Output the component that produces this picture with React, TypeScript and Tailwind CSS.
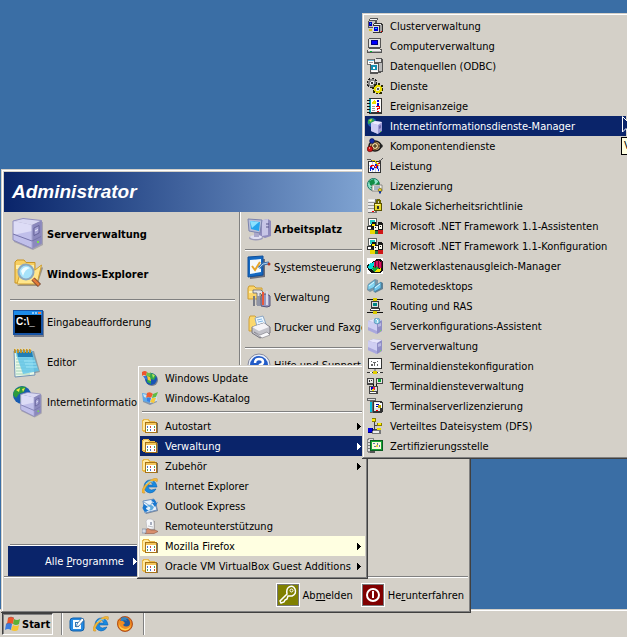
import React from "react";

type IconProps = { className?: string };
type IconType = (p: IconProps) => React.ReactElement;

const bevel =
  "bg-[#d4d0c8] p-[3px] shadow-[inset_-1px_-1px_0_#404040,inset_1px_1px_0_#d4d0c8,inset_-2px_-2px_0_#808080,inset_2px_2px_0_#ffffff]";

function icon(size: number, art: React.ReactNode, crisp = false): IconType {
  return ({ className = "" }) => (
    <svg
      viewBox={`0 0 ${size} ${size}`}
      width={size}
      height={size}
      className={`shrink-0 ${className}`}
      shapeRendering={crisp ? "crispEdges" : "auto"}
      aria-hidden="true"
    >
      {art}
    </svg>
  );
}

/* ---------- 32px and 24px icons ---------- */

const tower = (
  <>
    <path d="M2 4 L12 2 L31 4 L31 27 L21 32 L2 24Z" fill="#777592" opacity=".5" />
    <path d="M1 3 L11 .5 L29.500 2.500 L20 7Z" fill="#d9d8f2" />
    <path d="M1 3 L20 7 V30 L1 22Z" fill="#c0bfea" />
    <path d="M1 3 L20 7 V13 L1 17Z" fill="#dddcf6" />
    <path d="M20 7 L29.500 2.500 V25.500 L20 30.500Z" fill="#8b88bd" />
    <path d="M1 3 L11 .5 L29.500 2.500 V25.500 L20 30.500 L1 22Z" fill="none" stroke="#8f8dbd" />
    <path d="M20 7V30" stroke="#a5a3d0" />
    <path d="M1 16 L20 23 L29 18.500" fill="none" stroke="#7674aa" />
    <path d="M22 10 L27 7.500 V15 L22 17.500Z" fill="#a5a2d4" stroke="#5b588f" strokeWidth=".8" />
    <path d="M23 13 L26 11.500" stroke="#eeeeff" />
    <rect x="25" y="23" width="2" height="2" fill="#7be04c" />
  </>
);

const ServerLarge = icon(32, tower);

const ExplorerLarge = icon(
  32,
  <>
    <path d="M5 28 L25 28 L31 10 L30 9Z" fill="#746b58" opacity=".6" />
    <path d="M3 4 L5 2 H12 L14 4.500 H23 V25 H3Z" fill="#f7cf62" stroke="#c99524" />
    <path d="M4 7 H22 V11 H4Z" fill="#fff0ac" />
    <path d="M23 12 L29.500 7 L25 26 H5 L9 12Z" fill="#ffe68c" stroke="#d1a032" />
    <path d="M21 21 L27.500 27.500" stroke="#7c4a33" strokeWidth="4.500" />
    <path d="M21 21 L27 27" stroke="#e27b39" strokeWidth="2.500" />
    <circle cx="14" cy="14" r="7.500" fill="#a6e2fa" stroke="#8ca7bd" strokeWidth="2" />
    <path d="M9 13 Q12 7 18 10 Q13 11 11 18Z" fill="#effcff" />
  </>
);

const ConsoleLarge = icon(
  32,
  <>
    <rect x="2" y="5" width="30" height="26" fill="#767d8c" />
    <rect x="1" y="4" width="30" height="25" fill="#1653a4" />
    <rect x="2" y="5" width="28" height="4" fill="#1d8be8" />
    <rect x="20" y="6" width="2" height="2" fill="#8cc8fa" />
    <rect x="23" y="6" width="2" height="2" fill="#8cc8fa" />
    <rect x="26" y="6" width="3" height="2" fill="#f57c46" />
    <rect x="3" y="9" width="26" height="18" fill="#000" />
    <text x="4" y="19" fontSize="10" fontWeight="bold" fontFamily="Liberation Sans, sans-serif" fill="#fff">
      C:\_
    </text>
  </>
);

const NotepadLarge = icon(
  32,
  <>
    <path d="M3 5 L22 5 L28 26 L5 31Z" fill="#657a85" opacity=".6" />
    <path d="M2 5 H20 L23 29 L3 31Z" fill="#e9f8e7" stroke="#7193b5" />
    <path d="M4 10H15 M4 13H16 M4 16H16 M4 19H17 M4 22H18 M4 25H19 M4 28H18" stroke="#a4d2b9" />
    <path d="M3 5 H20 L27 25 L11 28Z" fill="#61c5e9" opacity=".85" />
    <path d="M5 6 H20 L21 11 H6Z" fill="#227eb5" />
    <path d="M12 15H23 M13 18H24 M14 21H25" stroke="#a0e6f6" />
    <path d="M3 7V3 M6 7V3 M9 7V3 M12 7V3 M15 7V3 M18 7V3" stroke="#bc922e" strokeWidth="2" />
    <path d="M3 3H4 M6 3H7 M9 3H10 M12 3H13 M15 3H16 M18 3H19" stroke="#ffe895" />
  </>
);

const IisLarge = icon(
  32,
  <>
    <circle cx="10" cy="9" r="9" fill="#185bb0" />
    <path d="M2 5 Q7 -1 14 1 L12 6 L7 8 L4 12 L1 9Z" fill="#2b9b3d" />
    <path d="M8 9 L14 7 L12 17 L8 16Z" fill="#208d35" />
    <path d="M4 4L8 2L7 6Z M10 3L13 2L11 6Z" fill="#f2e94c" />
    <g transform="translate(8 6) scale(.7 .8)">{tower}</g>
  </>
);

const MyComputer = icon(
  24,
  <>
    <path d="M12 4 L21 2 L24 4 V19 L18 21 L11 18Z" fill="#8f8bbc" />
    <path d="M15 3 L21 2 V18 L15 19Z" fill="#c7c5e6" />
    <path d="M19 7H22 M19 10H22" stroke="#565488" />
    <ellipse cx="9" cy="21" rx="7" ry="2.500" fill="#9c9bb9" />
    <ellipse cx="9" cy="20" rx="6" ry="2" fill="#e0dff2" />
    <path d="M7 15H12V20H7Z" fill="#aaa8cb" />
    <path d="M1 2 L15 3 L13 16 L2 14Z" fill="#b8bed9" stroke="#7c83ad" />
    <path d="M3 4 L13 5 L12 14 L4 12Z" fill="#25a5ed" />
    <path d="M3 4 L12 5 L5 11Z" fill="#8be2ff" />
  </>
);

const ControlPanel = icon(
  24,
  <>
    <path d="M3 4H18V22L3 24Z" fill="#6c6d77" />
    <path d="M1 2L16 1V20L1 22Z" fill="#1469c2" stroke="#104f99" />
    <path d="M3 5L14 4V17L3 19Z" fill="#f6fafc" />
    <path d="M5 11L8 15L13 7" fill="none" stroke="#e6a62d" strokeWidth="2" />
    <path d="M12 13L16 9L22 8" fill="none" stroke="#3e70aa" strokeWidth="3" />
    <path d="M12 13L16 9L21 8" fill="none" stroke="#a8d1ef" />
    <circle cx="22" cy="9" r="1.500" fill="#b43b24" />
  </>
);

const AdminTools = icon(
  24,
  <>
    <path d="M1 3L2 1H7L9 3H15V14H1Z" fill="#fbd56c" stroke="#cc9c31" />
    <path d="M2 6H14V8H2Z" fill="#fff2b2" />
    <path d="M6 8V5H14L17 8L15 10L13 8V20H10V8Z" fill="#e2e2e6" stroke="#66656f" strokeWidth=".8" />
    <path d="M10 11H13V21H10Z" fill="#9095a6" />
    <path d="M14 11L16 9H20L23 11V21L20 22L14 21Z" fill="#9797be" stroke="#555478" />
    <path d="M15 7H17V20H15Z" fill="#e9583b" />
    <path d="M19 6H21V20H19Z" fill="#dadae9" />
    <path d="M6 11H8V21H6Z" fill="#777b87" />
  </>
);

const Printer = icon(
  24,
  <>
    <path d="M2 4L3 1H8L10 3H16V16H2Z" fill="#fbd86e" stroke="#cfa03a" />
    <path d="M8 3L16 1L19 9L10 12Z" fill="#eaf6ff" stroke="#8da6c2" />
    <path d="M10 5L15 4M11 7L16 6" stroke="#86b8e4" />
    <path d="M5 12L17 8L23 12V18L13 23L5 18Z" fill="#c3c3ca" stroke="#77757d" />
    <path d="M5 12L17 8L22 12L12 16Z" fill="#f5f4f7" />
    <path d="M7 17L13 20L20 17L23 20L15 23Z" fill="#f9f9fb" stroke="#77757d" strokeWidth=".6" />
  </>
);

const Help = icon(
  24,
  <>
    <circle cx="12" cy="12" r="11" fill="#eaf0fb" stroke="#85899e" />
    <circle cx="12" cy="12" r="9" fill="#225bc7" />
    <path d="M8 10 Q8 6 12 6 Q16 6 16 9 Q16 11 13 12 V15" fill="none" stroke="#fff" strokeWidth="2.500" />
    <rect x="12" y="17" width="2" height="2" fill="#fff" />
  </>
);

const Key = icon(
  24,
  <>
    <rect width="24" height="24" fill="#fff" />
    <rect x="1" y="1" width="22" height="22" fill="#777777" />
    <rect x="2" y="2" width="20" height="20" fill="#808000" />
    <path d="M11 11 Q10 6 13 4 Q17 2 19 6 Q21 11 16 13 L12 13 L11 16 L9 17 L8 19 L5 20 L4 18Z" fill="none" stroke="#fff" strokeWidth="1.500" />
    <circle cx="15.500" cy="7.500" r="1.500" fill="none" stroke="#fff" />
  </>
);

const Power = icon(
  24,
  <>
    <rect width="24" height="24" fill="#fff" />
    <rect x="1" y="1" width="22" height="22" fill="#777777" />
    <rect x="2" y="2" width="20" height="20" fill="#800000" />
    <circle cx="12" cy="12" r="6" fill="none" stroke="#fff" strokeWidth="2" />
    <path d="M12 8V15" stroke="#fff" strokeWidth="2" />
  </>
);

/* ---------- 16px colour icons ---------- */

const WindowsFlag = icon(
  16,
  <>
    <path d="M4 2Q7 0 10 2L9 8Q6 6 3 8Z" fill="#ef562b" />
    <path d="M10 3Q13 5 16 3L15 8Q12 10 9 8Z" fill="#5cb135" />
    <path d="M2 8Q5 6 8 8L7 14Q4 12 1 14Z" fill="#3d7dde" />
    <path d="M9 9Q12 11 15 9L14 14Q11 16 7 14Z" fill="#f6c431" />
    <path d="M4 2Q7 0 10 2M2 8Q5 6 8 8" fill="none" stroke="#8c4a4a" strokeWidth=".5" />
  </>
);

const WindowsUpdate = icon(
  16,
  <>
    <circle cx="10" cy="10" r="6" fill="#777f8c" />
    <circle cx="9" cy="9" r="6" fill="#1854b5" />
    <path d="M6 6L10 3L14 6L12 10L9 9L9 14L5 12Z" fill="#31a84a" />
    <path d="M10 4L13 5L11 8Z" fill="#b7e35a" />
    <path d="M0 2Q3 0 5 2L4 6Q2 4 0 6Z" fill="#ee552e" />
    <path d="M5 2Q7 4 9 2L8 6Q6 7 4 6Z" fill="#72c046" />
    <path d="M1 6L4 6L6 10L3 9Z" fill="#3975dc" />
    <path d="M5 6L8 7L9 11L6 10Z" fill="#f6c638" />
  </>
);

const WindowsCatalog = icon(
  16,
  <>
    <path d="M1 5L7 7L15 4L15 12L8 15L1 12Z" fill="#8995a8" />
    <path d="M0 3L6 4L8 13L1 11Z" fill="#5ba9ea" />
    <path d="M8 5L15 3V11L8 13Z" fill="#cfe2f2" />
    <path d="M1 4L5 5V8L2 7Z" fill="#c9e6f7" />
    <path d="M5 3Q8 1 11 4L9 8Q7 6 4 8Z" fill="#f05c31" />
    <path d="M11 4L16 2L14 7L10 8Z" fill="#61bb42" />
    <path d="M5 8L9 8L8 12L5 11Z" fill="#3c7de2" />
    <path d="M10 8L14 8L12 13L8 12Z" fill="#f8ca3b" />
  </>
);

const ProgramFolder = icon(
  16,
  <>
    <path d="M3 15H16V5H15Z" fill="#777068" />
    <path d="M0 3L1 1H6L8 3H13V6H4V14H1L0 12Z" fill="#e9b94a" />
    <path d="M1 3L2 2H6L7 4H12V5H3V12H1Z" fill="#ffe9a0" />
    <path d="M3 4H15V15H3Z" fill="#a87418" />
    <path d="M4 5H14V7H4Z" fill="#f3c65c" />
    <path d="M4 7H14V14H4Z" fill="#ffffff" />
    <path d="M5 8H6V10H5Z M8 11H9V13H8Z" fill="#4876c8" />
    <path d="M8 8H9V10H8Z M12 11H13V13H12Z" fill="#d45135" />
    <path d="M12 8H13V10H12Z M5 11H6V13H5Z" fill="#48a55b" />
  </>,
  true,
);

const InternetExplorer = icon(
  16,
  <>
    <path
      d="M15 9H6Q7 12 9.500 12L14 11Q12 15 8 15Q2 14 2 8Q3 2 8.500 2Q14 2.500 15 9ZM6 7H11Q10 4.500 8.500 4.500Q6.500 4.500 6 7Z"
      fill="#198be0"
      stroke="#0b60b2"
      strokeWidth=".6"
      fillRule="evenodd"
    />
    <path d="M3 15Q-2 16 1 10Q5 3 12 .5Q17 -1 15 4Q14 2 11 3Q4 7 2 13Z" fill="#f4b834" stroke="#bf8420" strokeWidth=".4" />
    <path d="M4 6Q7 2 11 4" stroke="#78ceff" fill="none" />
  </>
);

const OutlookExpress = icon(
  16,
  <>
    <path d="M2 5L14 3L16 13L4 16Z" fill="#7b8799" />
    <path d="M1 3L12 1L15 12L3 15Z" fill="#e9f2fb" stroke="#6e91bd" />
    <path d="M2 4L8 8L12 2" fill="none" stroke="#84add5" />
    <path d="M11 1Q14 2 14 5L16 4L13 9L10 5H12Q11 3 9 3Z M4 14Q1 13 1 10L0 11L2 6L6 9L4 10Q4 12 7 12Z" fill="#1978d0" />
    <path d="M5 8Q8 5 12 9Q10 14 7 12Q9 11 8 9Z" fill="#5eabdf" />
  </>
);

const RemoteAssist = icon(
  16,
  <>
    <path d="M6 3H13V13H6Z" fill="#a3a09c" />
    <path d="M4 3Q5 0 9 1Q12 1 12 5V11H5Z" fill="#f7f8fa" stroke="#b9b8bb" strokeWidth=".7" />
    <path d="M9 4V7" stroke="#5a6684" />
    <path d="M6 8L11 9" stroke="#bcc0c8" />
    <path d="M3 12L6 10.500L9 12H13L16 13.500L12 15.500H3Z" fill="#d98f6c" stroke="#8f5843" strokeWidth=".6" />
    <path d="M0 11L4 11V15H0Z" fill="#d8dde6" stroke="#6f7d95" strokeWidth=".6" />
  </>
);

const QuickDesktop = icon(
  16,
  <>
    <rect x="1" y="2" width="14" height="13" rx="3" fill="#258be3" stroke="#105ea8" />
    <path d="M4 4H12V13H4Z" fill="#f4fbff" />
    <path d="M6 6.500H9M6 10.500H10M6.500 6V11" fill="none" stroke="#2d78b8" />
    <path d="M8 8L13 2L15 4L10 10L7.500 11Z" fill="#fff" stroke="#35679a" strokeWidth=".8" />
  </>
);

const Firefox = icon(
  16,
  <>
    <circle cx="8" cy="8" r="7.500" fill="#df6919" />
    <circle cx="8" cy="7" r="5" fill="#205a9f" />
    <path d="M4 1Q8 0 12 3L9 3L10 5Q6 3 4 6Z" fill="#3684bd" />
    <path d="M1 3L3 5L6 5L8 7L6 9Q9 12 13 9Q14 5 12 2Q17 8 13 13Q7 17 2 12Q-1 8 1 3Z" fill="#ef8d24" />
    <path d="M2 8Q3 12 8 13Q12 13 14 9Q12 16 6 14Q2 13 2 8Z" fill="#ffd04b" />
    <circle cx="8" cy="8" r="7.500" fill="none" stroke="#a2410f" strokeWidth=".8" />
  </>
);

/* ---------- 16px classic icons ---------- */

const Cluster = icon(
  16,
  <>
    <path d="M2 1H3V0H11V2H10V10H1V3H2Z" fill="#555" />
    <path d="M3 1H10V2H3Z" fill="#f5f5f5" />
    <path d="M2 3H8V9H2Z" fill="#c5c5c5" />
    <path d="M2 4H5V8H2Z" fill="#0000c0" />
    <path d="M3 5H4V6H3Z" fill="#00d9dc" />
    <path d="M6 6H7V5H15V6H16V14H15V15H6Z" fill="#333" />
    <path d="M7 6H14V7H7Z" fill="#f5f5f5" />
    <path d="M6 8H12V14H6Z" fill="#dcdcdc" />
    <path d="M7 9H11V13H7Z" fill="#0000df" />
    <path d="M8 10H10V11H8Z" fill="#00d9dc" />
    <path d="M13 7H15V14H13Z" fill="#a4a4a4" />
    <path d="M2 11H5V13H2Z" fill="#d4c020" />
    <path d="M14 13H15V14H14Z" fill="#f00" />
  </>,
  true,
);

const ComputerMgmt = icon(
  16,
  <>
    <path d="M2 0H14V10H13V11H15V15H0V12H2V10H1V1H2Z" fill="#555" />
    <path d="M2 1H13V9H2Z" fill="#e4e4e4" />
    <path d="M4 2H11V7H4Z" fill="#000080" />
    <path d="M5 3H10V6H5Z" fill="#0000ff" />
    <path d="M2 11H13V12H14V13H1V12H2Z" fill="#f0f0f0" />
    <path d="M1 13H14V14H1Z" fill="#aaa" />
    <path d="M3 13H5V14H3Z" fill="#00bb2c" />
  </>,
  true,
);

const Odbc = icon(
  16,
  <>
    <path d="M0 1H9V7H0Z" fill="#777" />
    <path d="M1 2H8V6H1Z" fill="#fff" />
    <path d="M1 2H7V3H1Z" fill="#69badd" />
    <path d="M2 4H6V5H2Z" fill="#999" />
    <path d="M7 1H9V0H15V1H16V14H14V15H11V16H3V6H7Z" fill="#555" />
    <path d="M8 1H14V4H8Z" fill="#e5e5e5" />
    <path d="M4 6H11V14H4Z" fill="#eeeeee" />
    <path d="M4 7H10V12H4Z" fill="#128daf" />
    <path d="M6 9H8V11H6Z" fill="#fff" />
    <path d="M12 5H15V13H12Z" fill="#bbb" />
    <path d="M5 13H11V14H5Z" fill="#fff" />
  </>,
  true,
);

const Services = icon(
  16,
  <>
    <circle cx="5" cy="5" r="4" fill="none" stroke="#222" strokeWidth="3" strokeDasharray="2 1" />
    <circle cx="5" cy="5" r="3" fill="#eee" stroke="#888" strokeWidth="2" />
    <circle cx="5" cy="5" r="1" fill="#333" />
    <circle cx="11" cy="11" r="4" fill="none" stroke="#282800" strokeWidth="3.500" strokeDasharray="2 1" />
    <circle cx="11" cy="11" r="3" fill="#e8e8d0" stroke="#e9dc00" strokeWidth="2" />
    <circle cx="11" cy="11" r="1" fill="#555" />
  </>,
  true,
);

const EventViewer = icon(
  16,
  <>
    <path d="M2 0H15V16H2Z" fill="#333" />
    <path d="M4 1H14V14H4Z" fill="#fff" />
    <path d="M2 1H4V15H2Z" fill="#00a0b0" />
    <path d="M0 2H3V3H0Z M0 5H3V6H0Z M0 8H3V9H0Z M0 11H3V12H0Z M0 14H3V15H0Z" fill="#111" />
    <path d="M5 8H8V9H5Z M5 10H8V11H5Z M5 12H8V13H5Z" fill="#999" />
    <path d="M5 4H6V3H7V2H8V3H9V6H5Z" fill="#f1de00" />
    <path d="M10 2H12V4H10Z M10 5H12V8H10Z" fill="#0000d5" />
    <path d="M9 8H13V11H11V12H10V10H12V9H9Z M10 13H12V14H10Z" fill="#e00" />
  </>,
  true,
);

const Iis = icon(
  16,
  <>
    <circle cx="5" cy="4.500" r="4.500" fill="#205eb0" />
    <path d="M1 2L5 0L8 3L5 5L1 6Z" fill="#30a656" />
    <path d="M2 2L5 1L4 4Z" fill="#e4e74d" />
    <path d="M4 5L8 3L15 4V13L11 16L4 13Z" fill="#9d9bd6" />
    <path d="M4 5L11 7V16L4 13Z" fill="#cfcef4" />
    <path d="M4 5L8 3L15 4L11 7Z" fill="#ecebff" />
    <path d="M12 8L14 7V10L12 11Z" fill="#6e6bab" />
    <path d="M13 13H14V14H13Z" fill="#7be04c" />
  </>
);

const Components = icon(
  16,
  <>
    <ellipse cx="8" cy="8" rx="6" ry="5" fill="#c7a47b" stroke="#161616" strokeWidth="1.500" />
    <circle cx="8" cy="8" r="3.500" fill="#f0d9a6" stroke="#604214" />
    <path d="M8 6V10M6 8H10" stroke="#241900" />
    <circle cx="3" cy="11" r="2.800" fill="#d31515" stroke="#450000" strokeWidth=".6" />
    <circle cx="5" cy="3" r="2.400" fill="#122aac" stroke="#030c45" strokeWidth=".6" />
    <circle cx="14" cy="8" r="1.800" fill="#222" />
    <path d="M2 10H3" stroke="#fff" />
  </>
);

const Performance = icon(
  16,
  <>
    <path d="M1 3H14V15H1Z" fill="#333" />
    <path d="M2 4H13V14H2Z" fill="#fff" />
    <path d="M5 4V14M8 4V14M11 4V14M2 7H13M2 10H13" stroke="#c3c9ec" />
    <path d="M3 13V8L6 12L9 6L12 13" fill="none" stroke="#0020df" />
    <path d="M3 9L6 7L9 10L11 5L13 6" fill="none" stroke="#f00000" />
    <path d="M0 1H3L6 4M12 5V2H14L16 0" fill="none" stroke="#555" />
    <path d="M5 2H7L12 8" fill="none" stroke="#e2c700" />
  </>,
  true,
);

const License = icon(
  16,
  <>
    <circle cx="6.500" cy="6.500" r="6" fill="#8de5cb" stroke="#147262" />
    <path d="M2 3L7 1L8 5L5 8L3 7ZM8 7L12 3L12 8L9 11ZM3 9L6 9L7 12Z" fill="#108d45" />
    <path d="M5 7H15V13H5Z" fill="#f7f4e8" stroke="#777" strokeWidth=".8" />
    <path d="M7 9H13M7 11H11" stroke="#5a72a1" />
    <circle cx="13" cy="12" r="1.800" fill="#e5ce27" stroke="#594a00" strokeWidth=".6" />
    <path d="M12 13H14V16L13 15L12 16Z" fill="#183d9a" />
  </>
);

const Policy = icon(
  16,
  <>
    <path d="M1 1H9L10 2V15H1Z" fill="#777" />
    <path d="M1 1H8V14H1Z" fill="#e9e9e9" />
    <path d="M1 4H8V5H1Z M1 7H8V8H1Z M1 10H8V11H1Z" fill="#999" />
    <path d="M2 2H7V3H2Z" fill="#fff" />
    <path d="M5 13H7V14H5Z" fill="#f00" />
    <path d="M9 6V2H10V1H13V2H14V6H12V3H11V6Z" fill="#6b6500" />
    <path d="M7 5H15V13H7Z" fill="#5b5300" />
    <path d="M8 6H14V12H8Z" fill="#e8da2c" />
    <path d="M8 6H13V7H8Z" fill="#fff89a" />
    <path d="M10 8H12V11H10Z" fill="#333" />
  </>,
  true,
);

const DotNet = icon(
  16,
  <>
    <path d="M1 0H10V8H1Z" fill="#5f6360" />
    <path d="M2 1H9V7H2Z" fill="#fff" />
    <path d="M3 2H8V6H3Z" fill="#24cec7" />
    <path d="M0 8H8V12H0Z" fill="#333" />
    <path d="M1 9H7V11H1Z" fill="#fff" />
    <path d="M4 6H5V4H9V7H11V4H15V5H16V12H12V15H6V11H4Z" fill="#171717" />
    <path d="M5 6H8V8H5Z" fill="#ffe900" />
    <path d="M7 8H11V12H7Z M12 7H15V11H12Z" fill="#fbf7e8" />
    <path d="M3 12H8V16H3Z" fill="#e6d800" />
    <path d="M8 13H11V16H8Z" fill="#267d38" />
    <path d="M11 12H16V16H11Z" fill="#cf1515" />
    <path d="M8 9H9V10H8Z M13 8H14V9H13Z" fill="#222" />
  </>,
  true,
);

const LoadBalance = icon(
  16,
  <>
    <path d="M0 0H16V16H0Z" fill="#fff" />
    <path d="M7 3L10 1H14L16 4V12L13 15H5L1 12L0 7L4 5Z" fill="#111" />
    <path d="M2 6L7 4L6 12L1 10Z" fill="#00dada" />
    <path d="M8 3H13L15 6V10H7V6Z" fill="#df1461" />
    <path d="M5 10L9 8L13 12L12 14H7Z" fill="#18a338" />
    <path d="M9 12L14 10V13L11 14H8Z" fill="#f5e500" />
    <path d="M8 2V10M11 2V10M14 3V10" stroke="#770030" />
  </>,
  true,
);

const RemoteDesktops = icon(
  16,
  <>
    <path d="M1 6L8 1L11 2V10L3 14L0 12Z" fill="#7f96a3" />
    <path d="M1 7L8 2V9L1 12Z" fill="#83d5f2" stroke="#5b93b0" strokeWidth=".7" />
    <path d="M7 9L14 4L16 5V11L8 15Z" fill="#5f8096" />
    <path d="M7 9L14 4V10L7 14Z" fill="#71c5ec" stroke="#3d7ea0" strokeWidth=".7" />
    <path d="M2 8L7 4M8 10L13 6" stroke="#dff9ff" />
  </>
);

const Routing = icon(
  16,
  <>
    <path d="M0 1H16V2H0Z M0 14H16V15H0Z" fill="#111" />
    <path d="M6 0H10V3H6Z M6 13H10V16H6Z" fill="#d9c900" />
    <path d="M4 3H12V10H13V13H3V11H4Z" fill="#3c3c3c" />
    <path d="M5 4H11V9H5Z" fill="#ddd" />
    <path d="M6 5H10V8H6Z" fill="#008684" />
    <path d="M4 11H12V12H4Z" fill="#fff" />
  </>,
  true,
);

const smallTower = (
  <>
    <path d="M1 3L6 1L15 2V13L10 16L1 12Z" fill="#8f8dc6" />
    <path d="M1 3L10 5V16L1 12Z" fill="#cfcef2" />
    <path d="M1 3L6 1L15 2L10 5Z" fill="#e6e5fb" />
    <path d="M1 9L10 13V16L1 12Z" fill="#a9a7dc" />
    <path d="M11 6L14 5V8L11 9Z" fill="#b9b7e2" />
    <path d="M13 12H14V13H13Z" fill="#7be04c" />
  </>
);

const ServerConfig = icon(
  16,
  <>
    {smallTower}
    <circle cx="10" cy="3" r="3" fill="#83cae4" stroke="#5f8cb4" strokeWidth=".7" />
    <path d="M9 1L11 3L10 5" stroke="#fff" fill="none" />
  </>
);

const ServerSmall = icon(16, smallTower);

const TerminalConfig = icon(
  16,
  <>
    <path d="M1 0H15V11H1Z" fill="#333" />
    <path d="M2 1H14V10H2Z" fill="#fff" />
    <path d="M4 3H5V4H4Z M10 3H11V4H10Z M6 4H9V5H6Z M4 6H6V8H4Z M7 5H8V8H7Z M10 6H11V8H10Z" fill="#666" />
    <path d="M7 11H9V14H7Z" fill="#999" />
    <path d="M0 14H16V15H0Z" fill="#333" />
    <path d="M6 13H10V16H6Z" fill="#e1ce00" />
    <path d="M3 14H5V15H3Z M11 14H13V15H11Z" fill="#fff" />
  </>,
  true,
);

const TerminalMgmt = icon(
  16,
  <>
    <path d="M0 0H7V7H0Z M9 0H16V6H9Z" fill="#444" />
    <path d="M1 1H6V5H1Z M10 1H15V5H10Z" fill="#e6e6e6" />
    <path d="M2 2H3V4H2Z M4 2H5V3H4Z" fill="#333" />
    <path d="M11 1H14V4H11Z" fill="#08a733" />
    <path d="M6 6V8H9V6" stroke="#111" fill="none" />
    <path d="M2 8H11V16H2Z" fill="#444" />
    <path d="M3 9H10V13H3Z" fill="#ddd" />
    <path d="M4 9H6V12H4Z" fill="#00c" />
    <path d="M6 9H8V12H6Z" fill="#eb1d34" />
    <path d="M5 11H7V13H5Z" fill="#ece100" />
    <path d="M3 14H9V15H3Z" fill="#fff" />
  </>,
  true,
);

const TerminalLicense = icon(
  16,
  <>
    <path d="M0 0H9V3H6V15H3V3H0Z" fill="#666" />
    <path d="M1 1H8V2H1Z" fill="#ddd" />
    <path d="M3 4H5V14H3Z" fill="#00bdda" />
    <path d="M6 3H14L16 5V13L14 15H6Z" fill="#333" />
    <path d="M7 4H13V13H7Z" fill="#e5e5e5" />
    <path d="M8 5H15V10H8Z" fill="#fff" />
    <path d="M9 6H12V7H9Z M9 8H11V9H9Z" fill="#0000a5" />
    <path d="M11 7H14V10H11Z" fill="#bda900" />
    <path d="M9 12H11V13H9Z" fill="#f00" />
  </>,
  true,
);

const Dfs = icon(
  16,
  <>
    <path d="M7 4V11H5M7 7H11M7 11H11" stroke="#444" fill="none" />
    <path d="M5 0H9V4H5Z M10 5H15V8H10Z" fill="#8b8000" />
    <path d="M5 1H8V3H5Z M11 5H14V7H11Z" fill="#fff000" />
    <path d="M1 10H6V15H1Z" fill="#000070" />
    <path d="M1 10H5V14H1Z" fill="#0000e1" />
    <path d="M6 12H14V16H5V13Z" fill="#777" />
    <path d="M6 13H12V15H6Z" fill="#eee" />
    <path d="M10 10H14V12H10Z" fill="#ece000" />
  </>,
  true,
);

const CertAuthority = icon(
  16,
  <>
    <path d="M1 0H7V15H1L0 13V2Z" fill="#888" />
    <path d="M2 1H6V13H1V3Z" fill="#ddd" />
    <path d="M1 4H4M1 7H4M1 10H4" stroke="#777" />
    <path d="M3 2H16V13H3Z" fill="#0c5c21" />
    <path d="M4 3H15V12H4Z" fill="#18a535" />
    <path d="M5 4H14V11H5Z" fill="#fbf9dc" />
    <path d="M6 5H8V6H6Z M10 5H11V7H10Z M7 8H9V9H7Z M12 7H13V9H12Z" fill="#6575a7" />
    <path d="M9 7H11V9H9Z" fill="#e6d23a" />
    <path d="M3 13H8V15H3Z" fill="#555" />
  </>,
  true,
);

/* ---------- menu parts ---------- */

function Arrow() {
  return (
    <svg width="4" height="7" viewBox="0 0 4 7" className="shrink-0" shapeRendering="crispEdges" aria-hidden="true">
      <path d="M0 0H1V1H2V2H3V3H4V4H3V5H2V6H1V7H0Z" fill="currentColor" />
    </svg>
  );
}

function Divider({ className = "" }: { className?: string }) {
  return <hr className={`h-0.5 border-0 border-t border-t-[#808080] bg-white ${className}`} />;
}

type Entry = { label: string; Icon: IconType; more?: boolean; tone?: "selected" | "fresh" };

const tones = {
  selected: "bg-[#0a246a] text-white",
  fresh: "bg-[#ffffe1] text-black",
  plain: "text-black",
};

function MenuItem({ label, Icon, more, tone }: Entry) {
  return (
    <li role="none">
      <button
        type="button"
        role="menuitem"
        aria-haspopup={more ? "menu" : undefined}
        className={`flex h-5 w-full items-center pr-1 pl-0.5 text-left whitespace-nowrap ${tones[tone ?? "plain"]}`}
      >
        <Icon />
        <span className="ml-[7px] flex-1 pt-0.5">{label}</span>
        {more && <Arrow />}
      </button>
    </li>
  );
}

function LargeItem({ label, Icon, bold }: { label: string; Icon: IconType; bold?: boolean }) {
  return (
    <button
      type="button"
      className={`flex h-10 w-full items-center gap-[3px] pl-2 text-left whitespace-nowrap ${bold ? "font-bold" : ""}`}
    >
      <Icon />
      <span className="pt-0.5">{label}</span>
    </button>
  );
}

function PlaceItem({ children, Icon, bold }: { children: React.ReactNode; Icon: IconType; bold?: boolean }) {
  return (
    <button
      type="button"
      className={`flex h-[30px] w-full items-center gap-[3px] pl-1.5 text-left whitespace-nowrap ${bold ? "font-bold" : ""}`}
    >
      <Icon />
      <span className="pt-0.5">{children}</span>
    </button>
  );
}

const links: Entry[] = [
  { label: "Windows Update", Icon: WindowsUpdate },
  { label: "Windows-Katalog", Icon: WindowsCatalog },
];

const programs: Entry[] = [
  { label: "Autostart", Icon: ProgramFolder, more: true },
  { label: "Verwaltung", Icon: ProgramFolder, more: true, tone: "selected" },
  { label: "Zubehör", Icon: ProgramFolder, more: true },
  { label: "Internet Explorer", Icon: InternetExplorer },
  { label: "Outlook Express", Icon: OutlookExpress },
  { label: "Remoteunterstützung", Icon: RemoteAssist },
  { label: "Mozilla Firefox", Icon: ProgramFolder, more: true, tone: "fresh" },
  { label: "Oracle VM VirtualBox Guest Additions", Icon: ProgramFolder, more: true },
];

const adminTools: Entry[] = [
  { label: "Clusterverwaltung", Icon: Cluster },
  { label: "Computerverwaltung", Icon: ComputerMgmt },
  { label: "Datenquellen (ODBC)", Icon: Odbc },
  { label: "Dienste", Icon: Services },
  { label: "Ereignisanzeige", Icon: EventViewer },
  { label: "Internetinformationsdienste-Manager", Icon: Iis, tone: "selected" },
  { label: "Komponentendienste", Icon: Components },
  { label: "Leistung", Icon: Performance },
  { label: "Lizenzierung", Icon: License },
  { label: "Lokale Sicherheitsrichtlinie", Icon: Policy },
  { label: "Microsoft .NET Framework 1.1-Assistenten", Icon: DotNet },
  { label: "Microsoft .NET Framework 1.1-Konfiguration", Icon: DotNet },
  { label: "Netzwerklastenausgleich-Manager", Icon: LoadBalance },
  { label: "Remotedesktops", Icon: RemoteDesktops },
  { label: "Routing und RAS", Icon: Routing },
  { label: "Serverkonfigurations-Assistent", Icon: ServerConfig },
  { label: "Serververwaltung", Icon: ServerSmall },
  { label: "Terminaldienstekonfiguration", Icon: TerminalConfig },
  { label: "Terminaldiensteverwaltung", Icon: TerminalMgmt },
  { label: "Terminalserverlizenzierung", Icon: TerminalLicense },
  { label: "Verteiltes Dateisystem (DFS)", Icon: Dfs },
  { label: "Zertifizierungsstelle", Icon: CertAuthority },
];

function StartMenu() {
  return (
    <section aria-label="Startmenü" className={`absolute bottom-6 left-px flex w-[470px] flex-col ${bevel}`}>
      <h1 className="flex h-10 items-center bg-linear-to-r from-[#0a246a] to-[#a6caf0] pl-2 font-['Liberation_Sans',Arial,sans-serif] text-[19px] font-bold text-white italic">
        Administrator
      </h1>
      <div className="flex">
        <div className="flex h-[364px] w-[235px] flex-col pt-0.5">
          <LargeItem label="Serververwaltung" Icon={ServerLarge} bold />
          <LargeItem label="Windows-Explorer" Icon={ExplorerLarge} bold />
          <Divider className="mt-[5px] mr-1 mb-px ml-1.5" />
          <LargeItem label="Eingabeaufforderung" Icon={ConsoleLarge} />
          <LargeItem label="Editor" Icon={NotepadLarge} />
          <LargeItem label="Internetinformation" Icon={IisLarge} />
          <Divider className="mt-auto mr-1 ml-1.5" />
          <button
            type="button"
            aria-haspopup="menu"
            className="mx-1 flex h-[30px] shrink-0 items-center bg-[#0a246a] pl-[37px] text-white"
          >
            <span className="w-[88px] pt-0.5 text-left">
              Alle <u>P</u>rogramme
            </span>
            <Arrow />
          </button>
        </div>
        <div className="flex-1 border-l border-l-[#808080] pt-0.5 shadow-[inset_1px_0_0_#ffffff]">
          <div className="pl-px">
            <PlaceItem Icon={MyComputer} bold>
              Arbeitsplatz
            </PlaceItem>
            <Divider className="mx-1 mt-[5px] mb-px" />
            <PlaceItem Icon={ControlPanel}>
              S<u>y</u>stemsteuerung
            </PlaceItem>
            <PlaceItem Icon={AdminTools}>Verwaltung</PlaceItem>
            <PlaceItem Icon={Printer}>Drucker und Faxgeräte</PlaceItem>
            <Divider className="mx-1 mt-[5px] mb-px" />
            <PlaceItem Icon={Help}>Hilfe und Support</PlaceItem>
          </div>
        </div>
      </div>
      <Divider />
      <div className="flex h-8 items-center justify-end gap-2 pt-0.5 pr-1">
        <button type="button" className="flex items-center gap-[3px]">
          <Key />
          <span className="pt-0.5">
            Ab<u>m</u>elden
          </span>
        </button>
        <button type="button" className="flex items-center gap-[3px]">
          <Power />
          <span className="pt-0.5">
            He<u>r</u>unterfahren
          </span>
        </button>
      </div>
    </section>
  );
}

function Taskbar() {
  return (
    <footer className="flex h-7 items-start border-t border-t-[#d4d0c8] bg-[#d4d0c8] pt-[3px] pl-0.5 shadow-[inset_0_1px_0_#ffffff]">
      <button
        type="button"
        className="flex h-[22px] w-[51px] items-center gap-0.5 border border-t-[#404040] border-r-white border-b-white border-l-[#404040] pl-px font-bold shadow-[inset_1px_1px_0_#808080]"
      >
        <WindowsFlag />
        <span className="pt-0.5">Start</span>
      </button>
      <span className="ml-2 h-[22px] w-0.5 border-l border-l-[#808080] bg-white" />
      <nav aria-label="Schnellstart" className="flex h-[22px] items-center gap-2 px-1.5">
        <button type="button" aria-label="Desktop anzeigen">
          <QuickDesktop />
        </button>
        <button type="button" aria-label="Internet Explorer">
          <InternetExplorer />
        </button>
        <button type="button" aria-label="Mozilla Firefox">
          <Firefox />
        </button>
      </nav>
      <span className="ml-1 h-[22px] w-0.5 border-l border-l-[#808080] bg-white" />
    </footer>
  );
}

export default function App() {
  return (
    <div className="relative flex h-screen w-full cursor-default flex-col overflow-hidden bg-[#3a6ea5] font-['DejaVu_Sans_Condensed',Tahoma,'DejaVu_Sans',sans-serif] text-[11px] leading-4 text-black">
      <main className="flex-1" />
      <Taskbar />
      <StartMenu />

      <div role="menu" aria-label="Alle Programme" className={`absolute bottom-[58px] left-[137px] w-[231px] ${bevel}`}>
        <ul>
          {links.map((e) => (
            <MenuItem key={e.label} {...e} />
          ))}
        </ul>
        <Divider className="mx-0.5 my-[3px]" />
        <ul>
          {programs.map((e) => (
            <MenuItem key={e.label} {...e} />
          ))}
        </ul>
      </div>

      <div role="menu" aria-label="Verwaltung" className={`absolute bottom-[178px] left-[362px] w-[267px] ${bevel}`}>
        <ul>
          {adminTools.map((e) => (
            <MenuItem key={e.label} {...e} />
          ))}
        </ul>
      </div>

      <div
        role="tooltip"
        className="absolute top-[137px] left-[621px] border border-black bg-[#ffffe1] px-0.5 whitespace-nowrap"
      >
        V
      </div>
      <svg className="absolute top-[116px] left-[622px]" width="12" height="20" viewBox="0 0 12 20" aria-hidden="true">
        <path d="M.5 .5V16L4 12.500L6.500 18.500L9 17.500L6.500 11.500H11.500Z" fill="#0a246a" stroke="#fff" />
      </svg>
    </div>
  );
}
